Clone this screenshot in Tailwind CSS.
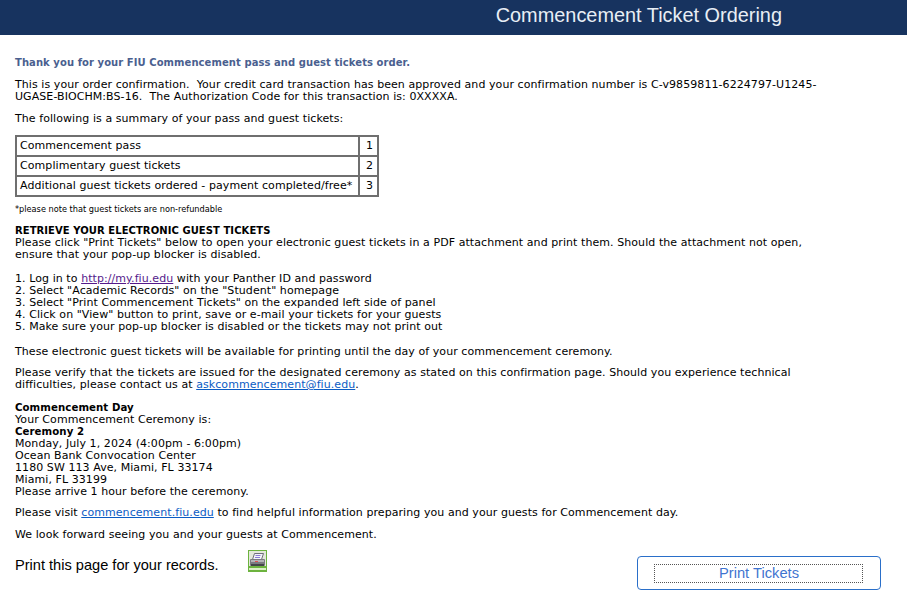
<!DOCTYPE html>
<html lang="en">
<head>
    <meta charset="UTF-8">
    <title>Commencement Ticket Ordering</title>
    <script src="https://cdn.jsdelivr.net/npm/@tailwindcss/browser@4"></script>
</head>
<body class="bg-white h-[602px] overflow-hidden font-['DejaVu_Sans',sans-serif] text-[11px] leading-[12px] tracking-[0.07px] text-black">
    <!-- Header -->
    <div class="bg-[#17335f] h-[35px] flex items-start justify-end pr-[125px]">
        <h1 class="font-['Liberation_Sans',sans-serif] text-[19.9px] leading-[30px] tracking-normal text-[#e8eef5]">Commencement Ticket Ordering</h1>
    </div>

    <main class="pl-[15px] pt-[22px]">
        <p class="font-bold text-[10px] text-[#4a5f8f]">Thank you for your FIU Commencement pass and guest tickets order.</p>

        <p class="mt-[10px] whitespace-pre">This is your order confirmation.  Your credit card transaction has been approved and your confirmation number is C-v9859811-6224797-U1245-<br>UGASE-BIOCHM:BS-16.  The Authorization Code for this transaction is: 0XXXXA.</p>

        <p class="mt-[10px]">The following is a summary of your pass and guest tickets:</p>

        <table class="mt-[10px] border-collapse border-2 border-[#6f6f6f]">
            <tbody>
                <tr class="h-[20px]">
                    <td class="border-2 border-[#6f6f6f] pl-[3px] pr-[3px] py-0 w-[343px]">Commencement pass</td>
                    <td class="border-2 border-[#6f6f6f] px-[4px] py-0 w-[19px] text-right">1</td>
                </tr>
                <tr class="h-[20px]">
                    <td class="border-2 border-[#6f6f6f] pl-[3px] pr-[3px] py-0">Complimentary guest tickets</td>
                    <td class="border-2 border-[#6f6f6f] px-[4px] py-0 text-right">2</td>
                </tr>
                <tr class="h-[20px]">
                    <td class="border-2 border-[#6f6f6f] pl-[3px] pr-[3px] py-0 whitespace-nowrap">Additional guest tickets ordered - payment completed/free*</td>
                    <td class="border-2 border-[#6f6f6f] px-[4px] py-0 text-right">3</td>
                </tr>
            </tbody>
        </table>

        <p class="mt-[7px] text-[8.2px] leading-[10px] tracking-normal">*please note that guest tickets are non-refundable</p>

        <p class="mt-[11px] font-bold text-[10px]">RETRIEVE YOUR ELECTRONIC GUEST TICKETS</p>
        <p>Please click "Print Tickets" below to open your electronic guest tickets in a PDF attachment and print them. Should the attachment not open,<br>ensure that your pop-up blocker is disabled.</p>

        <ol class="mt-[12px]">
            <li>1. Log in to <a href="#" class="text-[#551a8b] underline">http://my.fiu.edu</a> with your Panther ID and password</li>
            <li>2. Select "Academic Records" on the "Student" homepage</li>
            <li>3. Select "Print Commencement Tickets" on the expanded left side of panel</li>
            <li>4. Click on "View" button to print, save or e-mail your tickets for your guests</li>
            <li>5. Make sure your pop-up blocker is disabled or the tickets may not print out</li>
        </ol>

        <p class="mt-[13px]">These electronic guest tickets will be available for printing until the day of your commencement ceremony.</p>

        <p class="mt-[9px]">Please verify that the tickets are issued for the designated ceremony as stated on this confirmation page. Should you experience technical<br>difficulties, please contact us at <a href="#" class="text-[#0b5cc4] underline">askcommencement@fiu.edu</a>.</p>

        <div class="mt-[11px]">
            <p class="font-bold text-[10.2px]">Commencement Day</p>
            <p>Your Commencement Ceremony is:</p>
            <p class="font-bold text-[10.2px]">Ceremony 2</p>
            <p>Monday, July 1, 2024 (4:00pm - 6:00pm)</p>
            <p>Ocean Bank Convocation Center</p>
            <p>1180 SW 113 Ave, Miami, FL 33174</p>
            <p>Miami, FL 33199</p>
            <p>Please arrive 1 hour before the ceremony.</p>
        </div>

        <p class="mt-[9px]">Please visit <a href="#" class="text-[#0b5cc4] underline">commencement.fiu.edu</a> to find helpful information preparing you and your guests for Commencement day.</p>

        <p class="mt-[10px]">We look forward seeing you and your guests at Commencement.</p>

        <!-- Footer row -->
        <div class="flex items-start mt-[9px] pr-[26px] tracking-normal">
            <span class="font-['Liberation_Sans',sans-serif] text-[14.6px] leading-[16px] mt-[7px]">Print this page for your records.</span>
            <svg class="ml-[29px]" width="19" height="22" viewBox="0 0 19 22">
                <rect width="19" height="22" fill="#6db33f"/>
                <rect x="1" y="1" width="17" height="15" fill="#e4e8dc"/>
                <rect x="1" y="18" width="17" height="2" fill="#dcefc8"/>
                <path d="M6.500 3.500h9l-2 6h-9z" fill="#f4f4fa" stroke="#6f6f78" stroke-width="1"/>
                <path d="M7.500 5.500h5M7 7.500h5" stroke="#8a7ad8" stroke-width="1"/>
                <rect x="2" y="9" width="15" height="7" rx="1" fill="#7b7b80"/>
                <rect x="3" y="10" width="13" height="2" fill="#b4b4b8"/>
                <rect x="7" y="11" width="3" height="1" fill="#e05050"/>
                <rect x="3" y="14" width="13" height="2" fill="#44444a"/>
            </svg>
            <button class="ml-auto mt-[6px] w-[244px] h-[34px] rounded-[4px] border border-[#2a6fc9] bg-white flex items-center justify-center">
                <span class="mr-[1px] pl-[1px] w-[209px] h-[19px] border border-dotted border-[#555] flex items-center justify-center font-['Liberation_Sans',sans-serif] text-[14.7px] text-[#3f74d0]">Print Tickets</span>
            </button>
        </div>
    </main>
</body>
</html>
